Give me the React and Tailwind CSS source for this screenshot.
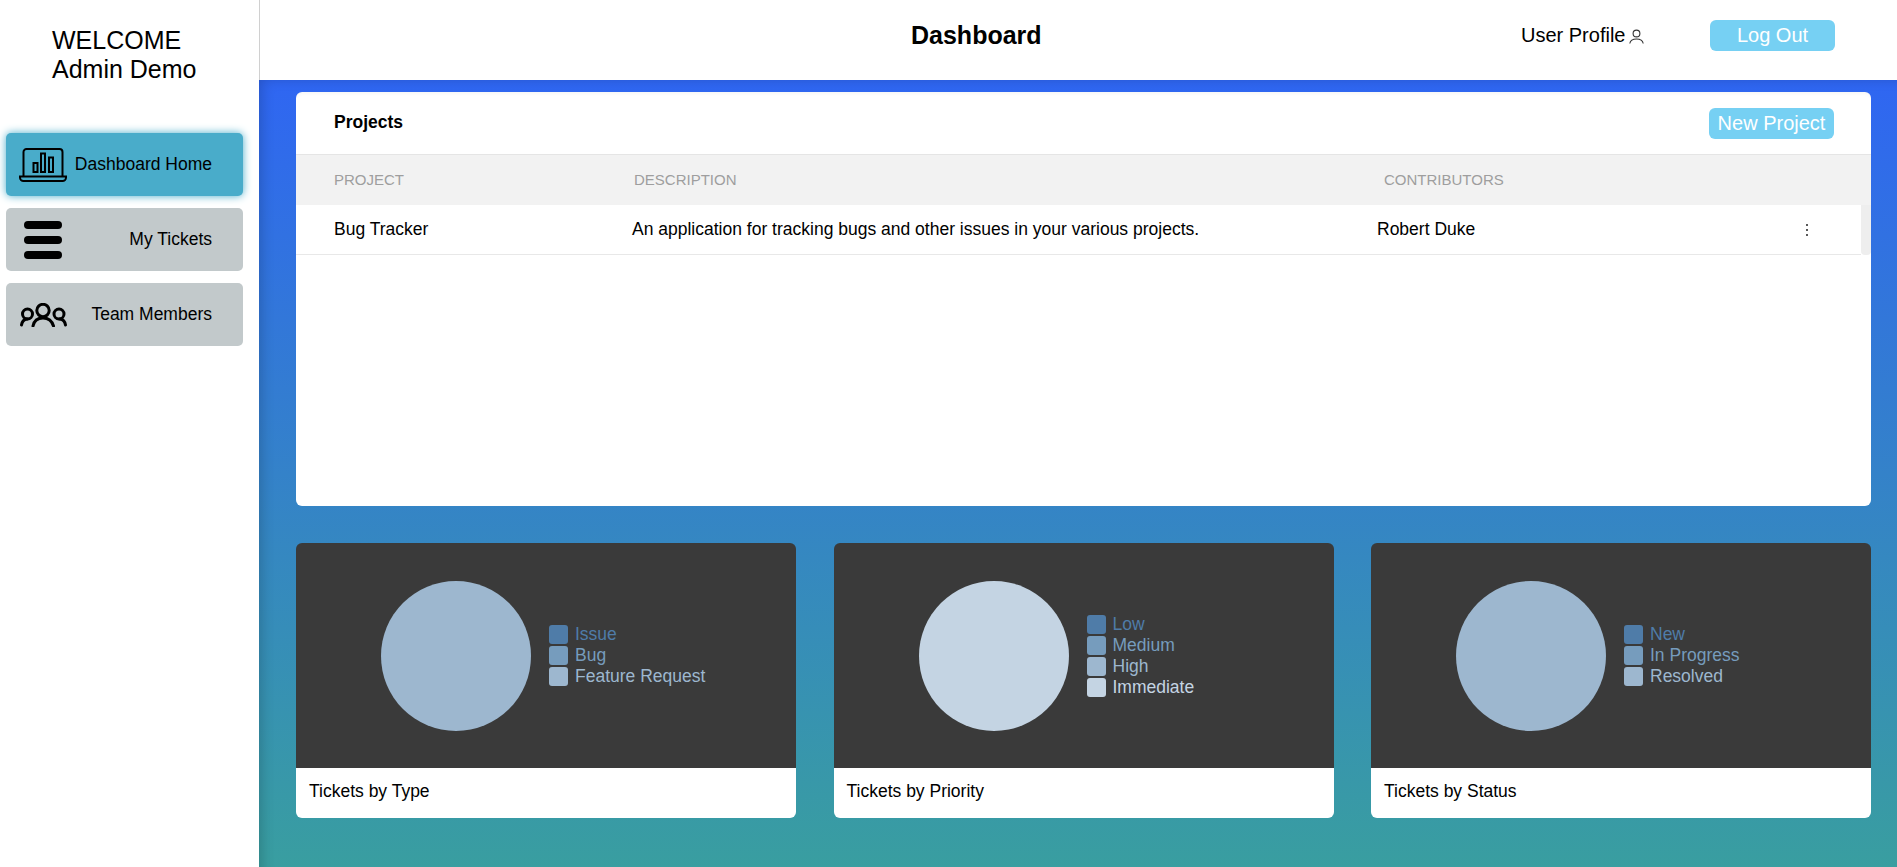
import React from 'react'

const font = { fontFamily: '"Liberation Sans", Arial, sans-serif' }

const charts = [
    {
        title: 'Tickets by Type',
        pie: 'bg-[#9db7cf]',
        legend: [
            { label: 'Issue', box: 'bg-[#4f7ca8]', text: 'text-[#4f7ca8]' },
            { label: 'Bug', box: 'bg-[#769cbd]', text: 'text-[#769cbd]' },
            { label: 'Feature Request', box: 'bg-[#9db7cf]', text: 'text-[#9db7cf]' },
        ],
    },
    {
        title: 'Tickets by Priority',
        pie: 'bg-[#c4d4e3]',
        legend: [
            { label: 'Low', box: 'bg-[#4f7ca8]', text: 'text-[#4f7ca8]' },
            { label: 'Medium', box: 'bg-[#769cbd]', text: 'text-[#769cbd]' },
            { label: 'High', box: 'bg-[#9db7cf]', text: 'text-[#9db7cf]' },
            { label: 'Immediate', box: 'bg-[#c4d4e3]', text: 'text-[#c4d4e3]' },
        ],
    },
    {
        title: 'Tickets by Status',
        pie: 'bg-[#9db7cf]',
        legend: [
            { label: 'New', box: 'bg-[#4f7ca8]', text: 'text-[#4f7ca8]' },
            { label: 'In Progress', box: 'bg-[#769cbd]', text: 'text-[#769cbd]' },
            { label: 'Resolved', box: 'bg-[#9db7cf]', text: 'text-[#9db7cf]' },
        ],
    },
]

function LaptopIcon() {
    return (
        <svg width="48" height="34" viewBox="0 0 48 34" fill="none" stroke="black" strokeWidth="2" className="block">
            <path d="M4.500 28V4a3 3 0 0 1 3-3h33a3 3 0 0 1 3 3v24" />
            <path d="M1 28.500h46v1a3.500 3.500 0 0 1-3.500 3.500h-39a3.500 3.500 0 0 1-3.500-3.500z" />
            <rect x="14.500" y="15" width="4" height="9" />
            <rect x="22" y="5.500" width="4" height="18.500" />
            <rect x="30" y="9.500" width="4" height="14.500" />
        </svg>
    )
}

function BarsIcon() {
    return (
        <div className="flex w-[38px] flex-col gap-[7px]">
            <div className="h-2 rounded-full bg-black" />
            <div className="h-2 rounded-full bg-black" />
            <div className="h-2 rounded-full bg-black" />
        </div>
    )
}

function TeamIcon() {
    return (
        <svg width="47" height="24" viewBox="0 0 47 24" fill="none" stroke="black" strokeWidth="3" strokeLinecap="round" className="block">
            <circle cx="7.500" cy="11" r="5" />
            <circle cx="23" cy="7.500" r="6.200" />
            <circle cx="39" cy="11" r="5" />
            <path d="M1.500 22c.5-3.500 2.500-5.500 5.500-6" />
            <path d="M13 23c1-5 4-8 10-8s9 3 10.500 8" />
            <path d="M45.500 22c-.5-3.500-2.500-5.500-5.500-6" />
        </svg>
    )
}

function NavItem({ icon, label, active, iconBox }) {
    return (
        <div
            className={
                'flex h-[63px] items-center justify-between rounded-[5px] pr-[31px] text-[17.5px] text-black ' +
                (active ? 'bg-[#49acca] shadow-[0_0_8px_#49acca]' : 'bg-[#c2c9cb]')
            }
        >
            <div className={iconBox}>{icon}</div>
            <span>{label}</span>
        </div>
    )
}

function ChartCard({ chart }) {
    return (
        <div className="w-[500px] overflow-hidden rounded-[6px]">
            <div className="flex h-[225px] items-center justify-center gap-[18px] bg-[#3a3a3a] pr-[2px]">
                <div className={'h-[150px] w-[150px] rounded-full ' + chart.pie} />
                <div className="flex w-[160px] flex-col gap-[2px]">
                    {chart.legend.map((item) => (
                        <div key={item.label} className="flex h-[19px] items-center gap-[7px]">
                            <div className={'h-[19px] w-[19px] rounded-[3px] ' + item.box} />
                            <span className={'text-[17.5px] ' + item.text}>{item.label}</span>
                        </div>
                    ))}
                </div>
            </div>
            <div className="flex h-[50px] items-center bg-white pb-[4px] pl-[13px] text-[17.5px] text-black">
                {chart.title}
            </div>
        </div>
    )
}

export default function App() {
    return (
        <div className="flex h-[867px] overflow-hidden bg-white" style={font}>
            {/* Sidebar */}
            <aside className="w-[259px] shrink-0 bg-white pl-[6px] pr-[16px]">
                <div className="pl-[46px] pt-[26px] text-[25px] leading-[29px] text-black">
                    <div>WELCOME</div>
                    <div>Admin Demo</div>
                </div>
                <nav className="mt-[49px] flex flex-col gap-[12px]">
                    <NavItem active label="Dashboard Home" icon={<LaptopIcon />} iconBox="pl-[13px]" />
                    <NavItem label="My Tickets" icon={<BarsIcon />} iconBox="pl-[18px]" />
                    <NavItem label="Team Members" icon={<TeamIcon />} iconBox="pl-[14px]" />
                </nav>
            </aside>

            <div className="flex min-w-0 flex-1 flex-col">
                {/* Header */}
                <header className="flex h-[80px] shrink-0 items-center border-l border-[#d0d0d0] bg-white pb-[9px]">
                    <h1 className="ml-[651px] w-[135px] text-[25px] font-bold text-black">Dashboard</h1>
                    <div className="ml-[475px] flex w-[189px] items-center gap-[4px] whitespace-nowrap pb-[2px] text-[20px] text-black">
                        User Profile
                        <svg width="15" height="15" viewBox="0 0 15 15" fill="none" stroke="#333" strokeWidth="1.1" className="mt-[3px]">
                            <circle cx="7.500" cy="4.500" r="3.400" />
                            <path d="M.8 14.500c.5-3 3-4.500 6.700-4.500s6.200 1.500 6.700 4.500" />
                        </svg>
                    </div>
                    <button className="h-[31px] w-[125px] rounded-[6px] bg-[#76d0f3] pb-[2px] text-[20px] text-white">Log Out</button>
                </header>

                {/* Main */}
                <main className="flex-1 bg-linear-to-b/srgb from-[#2f66f2] to-[#399ea0] pl-[37px] pr-[26px] pt-[12px] shadow-[inset_10px_6px_14px_-8px_rgba(0,0,0,0.2)]">
                    <section className="h-[414px] overflow-hidden rounded-[6px] bg-white shadow-[inset_0_4px_4px_-3px_rgba(0,0,0,0.05)]">
                        <div className="flex h-[63px] items-center justify-between border-b border-[#e5e5e5] pl-[38px] pr-[37px]">
                            <span className="pb-[2px] text-[17.5px] font-bold text-black">Projects</span>
                            <button className="h-[31px] w-[125px] rounded-[6px] bg-[#76d0f3] pb-[2px] text-[20px] text-white">New Project</button>
                        </div>
                        <div className="flex h-[50px] items-center bg-[#f2f2f2] text-[15px] text-[#9e9e9e]">
                            <span className="ml-[38px] w-[300px]">PROJECT</span>
                            <span className="w-[750px]">DESCRIPTION</span>
                            <span>CONTRIBUTORS</span>
                        </div>
                        <div className="flex h-[50px]">
                            <div className="flex flex-1 items-center border-b border-[#e8e8e8] text-[17.5px] text-black">
                                <span className="ml-[38px] w-[298px]">Bug Tracker</span>
                                <span className="w-[745px]">An application for tracking bugs and other issues in your various projects.</span>
                                <span>Robert Duke</span>
                                <svg width="4" height="14" viewBox="0 0 4 14" fill="#222" className="ml-auto mr-[52px]">
                                    <circle cx="2" cy="2" r="1" />
                                    <circle cx="2" cy="7" r="1" />
                                    <circle cx="2" cy="12" r="1" />
                                </svg>
                            </div>
                            <div className="w-[10px] rounded-b-[4px] bg-[#eeeeee]" />
                        </div>
                    </section>
                    <section className="mt-[37px] flex justify-between">
                        {charts.map((chart) => (
                            <ChartCard key={chart.title} chart={chart} />
                        ))}
                    </section>
                </main>
            </div>
        </div>
    )
}
